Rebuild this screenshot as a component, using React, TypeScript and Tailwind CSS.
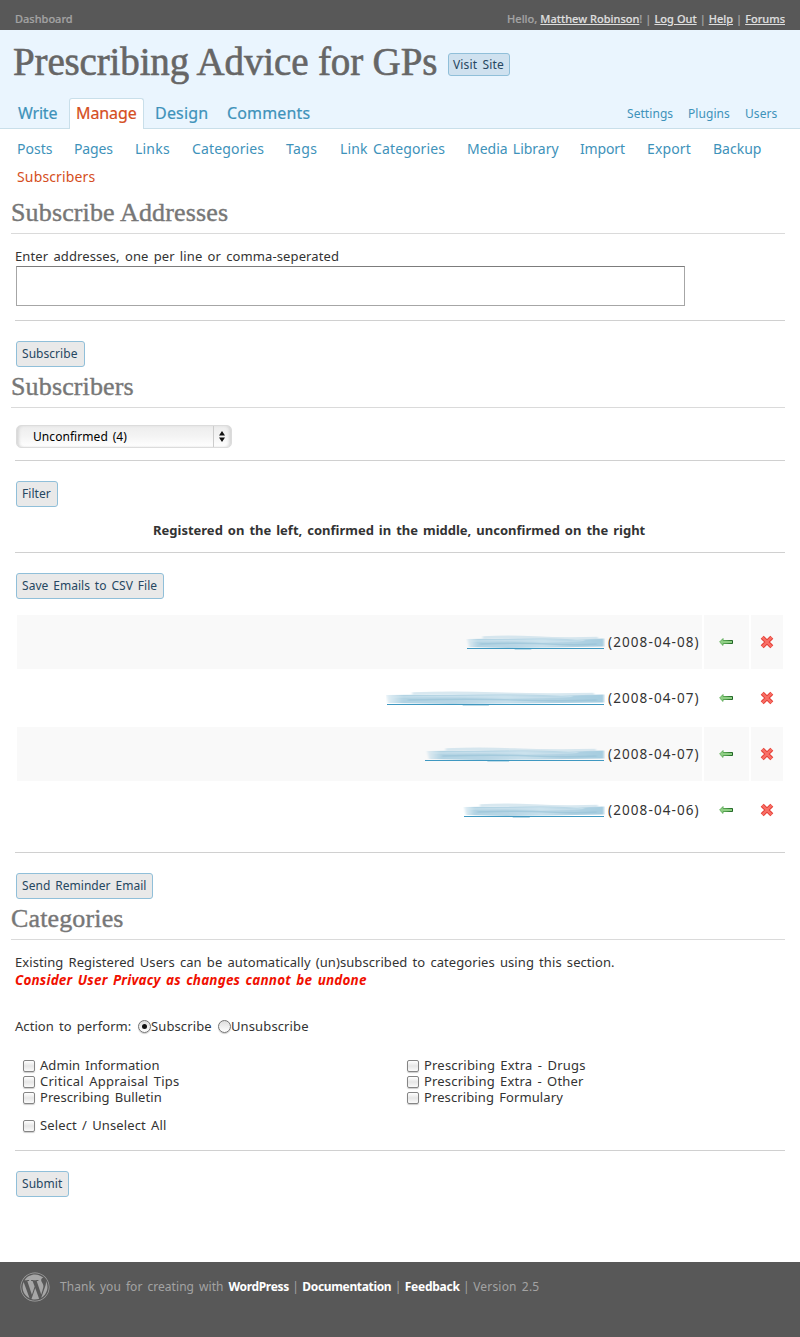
import React from "react";
import { FaWordpress } from "react-icons/fa";

function Heading({ children, className = "" }: { children: React.ReactNode; className?: string }) {
  return (
    <h2
      className={`ml-[11px] mr-[15px] h-[35px] border-b border-[#dadada] pt-px font-['Liberation_Serif',serif] text-[26px] leading-[26px] tracking-[0.14px] text-[#777] [word-spacing:0] [-webkit-text-stroke:0.4px_#777] whitespace-nowrap ${className}`}
    >
      {children}
    </h2>
  );
}

function Rule() {
  return <div className="mx-[15px] h-px bg-[#d0d0d0]" />;
}

function Button({ children, className = "" }: { children: React.ReactNode; className?: string }) {
  return (
    <button
      className={`ml-4 mt-5 block h-[26px] rounded-[3px] border border-[#90bfd9] bg-[#e9e9e9] pl-[5px] text-left text-[12px] leading-[24px] tracking-[0.04px] text-[#264761] [word-spacing:1.7px] whitespace-nowrap ${className}`}
    >
      {children}
    </button>
  );
}

const subNav = [
  { label: "Posts", cls: "w-[57px] tracking-[0px]" },
  { label: "Pages", cls: "w-[61px] tracking-[-0.15px]" },
  { label: "Links", cls: "w-[57px] tracking-[0.2px]" },
  { label: "Categories", cls: "w-[94px]" },
  { label: "Tags", cls: "w-[54px] tracking-[0.35px]" },
  { label: "Link Categories", cls: "w-[127px] [word-spacing:1.5px]" },
  { label: "Media Library", cls: "w-[113px] tracking-[0px] [word-spacing:1.5px]" },
  { label: "Import", cls: "w-[67px] tracking-[-0.15px]" },
  { label: "Export", cls: "w-[66px]" },
  { label: "Backup", cls: "w-[60px] tracking-[0px]" },
];

function Smudge({ w, id, left }: { w: number; id: string; left: number }) {
  return (
    <svg width={w} height="17" viewBox={`0 0 ${w} 17`} className="mr-[3px] mt-[19px] shrink-0">
      <defs>
        <linearGradient id={id} x1="0" x2="1" y1="0" y2="0">
          <stop offset="0" stopColor="#b9d8e7" stopOpacity="0.35" />
          <stop offset="0.08" stopColor="#b2d3e3" />
          <stop offset="0.35" stopColor="#b8d6e5" />
          <stop offset="0.55" stopColor="#c6dfeb" />
          <stop offset="0.75" stopColor="#b3d3e3" />
          <stop offset="1" stopColor="#a6cde0" />
        </linearGradient>
        <filter id={`${id}-soft`} x="-5%" y="-30%" width="110%" height="160%">
          <feGaussianBlur stdDeviation="1.2 0.6" />
        </filter>
      </defs>
      <g filter={`url(#${id}-soft)`}>
        <path
          d={`M${left} 5 L${w * 0.3} 4.5 L${w * 0.55} 4 L${w * 0.8} 5.5 L${w - 1} 4.5 L${w - 1} 12.5 L${w * 0.6} 13.5 L${w * 0.3} 14 L${left + 2} 13 Z`}
          fill={`url(#${id})`}
        />
        <path
          d={`M${w * 0.12} 3.5 Q${w * 0.3} 2 ${w * 0.5} 3.5 T${w * 0.95} 4`}
          fill="none"
          stroke="#c3dce8"
          strokeWidth="2.4"
          opacity="0.65"
        />
        <path
          d={`M${left + 4} 7 Q${w * 0.3} 6.5 ${w * 0.55} 7 T${w * 0.85} 6.5`}
          fill="none"
          stroke="#d6e8f1"
          strokeWidth="1"
          opacity="0.7"
        />
        <path
          d={`M${w * 0.1} 10 Q${w * 0.4} 8.5 ${w * 0.6} 10 T${w - 8} 10`}
          fill="none"
          stroke="#96c2d7"
          strokeWidth="1.4"
          opacity="0.6"
        />
      </g>
      <path d={`M1 14.5 H${w - 1}`} stroke="#3f98c1" strokeWidth="1" />
      <path d={`M${w * 0.35} 15.5 H${w * 0.47}`} stroke="#bddbe8" strokeWidth="1" />
    </svg>
  );
}

function LeftArrow() {
  return (
    <svg width="15" height="8" viewBox="0 0 15 8" className="ml-[15px] mt-[23px] block">
      <defs>
        <linearGradient id="arrow-edge" x1="0" x2="1" y1="0" y2="0">
          <stop offset="0" stopColor="#6fb868" />
          <stop offset="0.5" stopColor="#4d9c49" />
          <stop offset="1" stopColor="#1f6325" />
        </linearGradient>
      </defs>
      <path d="M0.6 4 L4 0.6 V2.5 H13.5 V5.5 H4 V7.4 Z" fill="#8fcf84" stroke="url(#arrow-edge)" strokeWidth="1" strokeLinejoin="round" />
    </svg>
  );
}

function Cross() {
  return (
    <svg width="14" height="14" viewBox="0 0 14 14" className="ml-[9px] mt-5 block">
      <path d="M2.2 2.2 L11.8 11.8 M11.8 2.2 L2.2 11.8" stroke="#e2382f" strokeWidth="4.2" />
      <path d="M2.4 2.4 L11.6 11.6 M11.6 2.4 L2.4 11.6" stroke="#f86f66" strokeWidth="2.4" />
    </svg>
  );
}

const rows = [
  { w: 139, left: 1, date: "(2008-04-08)", bg: "bg-[#f9f9f9]" },
  { w: 219, left: 0, date: "(2008-04-07)", bg: "" },
  { w: 181, left: 3, date: "(2008-04-07)", bg: "bg-[#f9f9f9]" },
  { w: 142, left: 1, date: "(2008-04-06)", bg: "" },
];

function Check({ label, cls = "" }: { label: string; cls?: string }) {
  return (
    <label className="flex h-4 items-center whitespace-nowrap leading-4">
      <span className="mr-[5px] mt-px h-3 w-3 shrink-0 rounded-[2px] border border-[#858585] bg-linear-to-b from-[#ffffff] via-[#e6e6e6] to-[#fafafa] shadow-[0_1px_1px_#cccccc]" />
      <span className={cls}>{label}</span>
    </label>
  );
}

function Radio({ on = false }: { on?: boolean }) {
  return (
    <span className="mt-px flex h-[13px] w-[13px] shrink-0 items-center justify-center rounded-full border border-[#737373] bg-linear-to-b from-[#dedede] to-[#ffffff] shadow-[0_1px_1px_#cccccc]">
      {on && <span className="h-[5px] w-[5px] rounded-full bg-[#111]" />}
    </span>
  );
}

export default function App() {
  return (
    <div className="flex h-[1337px] w-[800px] flex-col overflow-hidden bg-white font-['Noto_Sans',sans-serif] text-[13px] tracking-[0.06px] text-[#333] [word-spacing:1.7px]">
      <div className="flex h-[30px] shrink-0 justify-between bg-[#585858] px-[15px] pt-[10px] text-[11px] font-medium leading-[18px] tracking-normal text-[#a3a3a3] [-webkit-text-stroke:0.2px] [word-spacing:0.15px] whitespace-nowrap">
        <span>Dashboard</span>
        <span>
          Hello, <a className="text-[#dedede] underline">Matthew Robinson</a>! | <a className="text-[#dedede] underline">Log Out</a> |{" "}
          <a className="text-[#dedede] underline">Help</a> | <a className="text-[#dedede] underline">Forums</a>
        </span>
      </div>

      <header className="flex h-[99px] shrink-0 flex-col border-b border-[#c9dfea] bg-[#eaf5fe]">
        <div className="flex h-[68px] items-start">
          <h1 className="ml-[13px] mt-[12px] w-[435px] font-['Liberation_Serif',serif] text-[39px] leading-[40px] tracking-[-0.14px] text-[#666] [word-spacing:0] [-webkit-text-stroke:0.6px_#666] whitespace-nowrap">
            Prescribing Advice for GPs
          </h1>
          <a className="mt-[23px] h-[23px] w-[62px] rounded-[3px] border border-[#90bfd9] bg-[#cfe1ef] pl-1 text-[12px] leading-[22px] tracking-[0.15px] text-[#264761] [word-spacing:2px] whitespace-nowrap">
            Visit Site
          </a>
        </div>
        <nav className="flex h-[31px] pt-px text-[16px] leading-[30px] text-[#3e92ba] [-webkit-text-stroke:0.2px] whitespace-nowrap">
          <a className="ml-[18px] w-[51px] tracking-[-0.2px]">Write</a>
          <a className="h-[31px] w-[75px] rounded-t-[3px] border border-b-0 border-[#c9dfea] bg-white pl-[6px] leading-[28px] tracking-[-0.1px] text-[#d54e21]">
            Manage
          </a>
          <a className="ml-[11px] w-[72px] tracking-[0.2px]">Design</a>
          <a className="w-[400px] tracking-[0.15px]">Comments</a>
          <a className="w-[61px] text-[12px] leading-[31px] [-webkit-text-stroke:0]">Settings</a>
          <a className="w-[57px] text-[12px] leading-[31px] [-webkit-text-stroke:0]">Plugins</a>
          <a className="text-[12px] leading-[31px] [-webkit-text-stroke:0]">Users</a>
        </nav>
      </header>

      <nav className="flex h-[70px] shrink-0 flex-wrap content-start pl-[17px] pt-[6px] text-[14px] leading-[28px] tracking-[0.15px] text-[#3e92ba] whitespace-nowrap">
        {subNav.map((s) => (
          <a key={s.label} className={s.cls}>
            {s.label}
          </a>
        ))}
        <a className="w-[100px] tracking-[0.15px] text-[#d54e21]">Subscribers</a>
      </nav>

      <main className="flex h-[1063px] shrink-0 flex-col">
        <Heading>Subscribe Addresses</Heading>
        <p className="ml-[15px] mt-[13px] h-[18px] leading-[18px] tracking-[0.11px] whitespace-nowrap">
          Enter addresses, one per line or comma-seperated
        </p>
        <div className="ml-4 mt-px mb-[14px] h-10 w-[669px] shrink-0 border border-[#a6a6a6] border-t-[#7c7c7c]" />
        <Rule />
        <Button className="w-[69px]">Subscribe</Button>

        <Heading className="mt-[6px]">Subscribers</Heading>
        <div className="ml-4 mt-[17px] mb-3 flex h-[23px] w-[216px] shrink-0 rounded-[5px] border border-[#dcdcdc] bg-linear-to-b from-[#ededed] via-[#f4f4f4] to-[#ffffff] shadow-[inset_3px_0_3px_-1px_#d6d6d6,inset_-3px_0_3px_-1px_#d6d6d6] text-[12px] leading-[21px] text-black">
          <span className="w-[197px] border-r border-[#cccccc] pl-4 whitespace-nowrap">Unconfirmed (4)</span>
          <svg width="6" height="11" viewBox="0 0 6 11" className="ml-[5px] mt-[5px]">
            <path d="M3 0 L6 4.4 H0 Z M3 11 L6 6.6 H0 Z" fill="#111" />
          </svg>
        </div>
        <Rule />
        <Button className="w-[42px]">Filter</Button>
        <p className="ml-[153px] mt-[14px] mb-[13px] h-[18px] font-bold leading-[18px] tracking-[0px] [word-spacing:1.6px] whitespace-nowrap">
          Registered on the left, confirmed in the middle, unconfirmed on the right
        </p>
        <Rule />
        <Button className="w-[148px]">Save Emails to CSV File</Button>

        <div className="ml-[17px] mt-4 mb-[15px] flex flex-col gap-[2px]">
          {rows.map((r, i) => (
            <div key={i} className="flex h-[54px] gap-[2px]">
              <div className={`flex w-[685px] justify-end ${r.bg}`}>
                <Smudge w={r.w} id={`smudge${i}`} left={r.left} />
                <span className="mt-[18px] w-[94px] text-[13.5px] leading-[18px] tracking-[1.1px] whitespace-nowrap">{r.date}</span>
              </div>
              <div className={`w-[45px] ${r.bg}`}>
                <LeftArrow />
              </div>
              <div className={`w-8 ${r.bg}`}>
                <Cross />
              </div>
            </div>
          ))}
        </div>
        <Rule />
        <Button className="w-[137px]">Send Reminder Email</Button>

        <Heading className="mt-[6px]">Categories</Heading>
        <p className="ml-[15px] mt-[13px] h-[18px] leading-[18px] tracking-[0.07px] whitespace-nowrap">
          Existing Registered Users can be automatically (un)subscribed to categories using this section.
        </p>
        <p className="ml-[15px] h-[18px] text-[13.5px] font-bold italic leading-[18px] tracking-[0.18px] text-[#f01000] whitespace-nowrap">
          Consider User Privacy as changes cannot be undone
        </p>
        <div className="ml-[15px] mt-[28px] flex h-[18px] items-center leading-[18px] whitespace-nowrap">
          <span className="w-[123px]">Action to perform:</span>
          <Radio on />
          <span className="w-[67px] tracking-[0.12px]">Subscribe</span>
          <Radio />
          <span className="tracking-[0.12px]">Unsubscribe</span>
        </div>
        <div className="ml-[23px] mt-[22px] grid grid-cols-[384px_300px]">
          <Check label="Admin Information" />
          <Check label="Prescribing Extra - Drugs" cls="tracking-[0.2px]" />
          <Check label="Critical Appraisal Tips" cls="tracking-[0.25px]" />
          <Check label="Prescribing Extra - Other" cls="tracking-[0.18px]" />
          <Check label="Prescribing Bulletin" />
          <Check label="Prescribing Formulary" cls="tracking-[0.1px]" />
        </div>
        <div className="ml-[23px] mt-3 mb-[17px]">
          <Check label="Select / Unselect All" cls="tracking-[0.12px]" />
        </div>
        <Rule />
        <Button className="w-[53px]">Submit</Button>
      </main>

      <footer className="flex h-[75px] shrink-0 bg-[#585858] pl-5 pt-[10px] text-[12px] leading-[30px] text-[#a3a3a3] [word-spacing:1.8px] whitespace-nowrap">
        <FaWordpress className="mr-[10px] h-[30px] w-[30px] text-[#a6a6a6]" />
        <span>
          Thank you for creating with{" "}
          <span className="[word-spacing:0.2px]">
            <b className="tracking-[-0.34px] text-white">WordPress</b> | <b className="tracking-[-0.34px] text-white">Documentation</b> |{" "}
            <b className="tracking-[-0.25px] text-white">Feedback</b> |{" "}
          </span>
          <span className="tracking-[0.2px]">Version 2.5</span>
        </span>
      </footer>
    </div>
  );
}
